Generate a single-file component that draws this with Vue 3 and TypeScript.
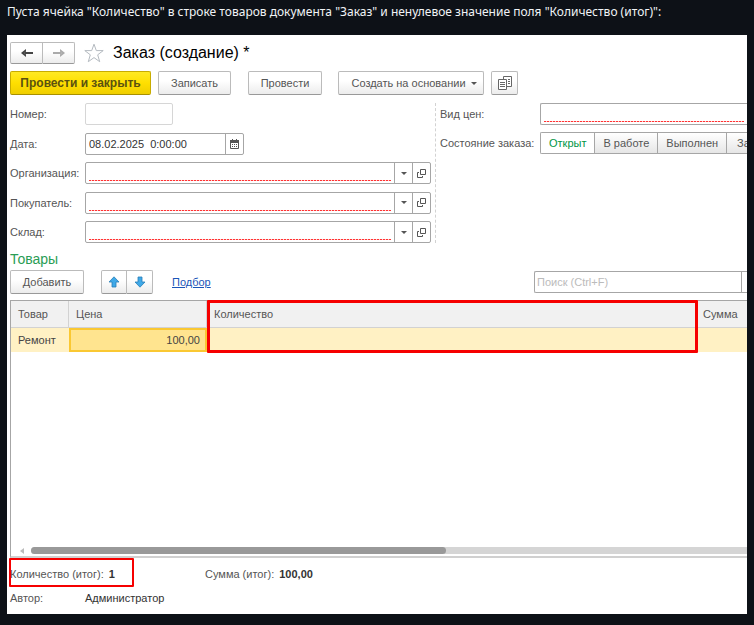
<script setup lang="ts">
import { ref } from 'vue'

interface Lookup {
  id: string
  label: string
}

interface Item {
  name: string
  price: string
  quantity: string
}

const lookups: Lookup[] = [
  { id: 'organization', label: 'Организация:' },
  { id: 'customer', label: 'Покупатель:' },
  { id: 'warehouse', label: 'Склад:' },
]

const states: string[] = ['Открыт', 'В работе', 'Выполнен', 'За']
const state = ref<string>('Открыт')
const orderDate = ref<string>('08.02.2025  0:00:00')
const items = ref<Item[]>([{ name: 'Ремонт', price: '100,00', quantity: '' }])
</script>

<template>
  <main class="page">
    <p class="caption">Пуста ячейка "Количество" в строке товаров документа "Заказ" и ненулевое значение поля "Количество (итог)":</p>

    <section class="window">
      <header class="title-row">
        <div class="pair nav">
          <button type="button" class="btn" aria-label="Назад">
            <svg width="12" height="10" viewBox="0 0 12 10"><path d="M12 4v2H4V4zM0 5l5-4v2.500L3.500 5 5 6.500V9z" fill="#444" /></svg>
          </button>
          <button type="button" class="btn" aria-label="Вперед">
            <svg width="12" height="10" viewBox="0 0 12 10"><path d="M0 4v2h8V4zM12 5L7 1v2.500L8.500 5 7 6.500V9z" fill="#aaa" /></svg>
          </button>
        </div>
        <svg class="star" width="22" height="20" viewBox="0 0 22 20"><path d="M11 1.2l2.300 6.400h6.900l-5.500 4.200 2 6.900L11 14.600l-5.700 4.100 2-6.900L1.800 7.600h6.900z" fill="#fff" stroke="#b4bac0" stroke-width="1" /></svg>
        <h1>Заказ (создание) *</h1>
      </header>

      <div class="toolbar">
        <button type="button" class="btn primary">Провести и закрыть</button>
        <button type="button" class="btn save">Записать</button>
        <button type="button" class="btn post">Провести</button>
        <button type="button" class="btn create">Создать на основании<span class="caret"></span></button>
        <button type="button" class="btn icon" aria-label="Документы">
          <svg width="14" height="14" viewBox="0 0 14 14" fill="#fff" stroke="#666">
            <path d="M5.500.5h8v10h-8z" />
            <path d="M10 3.500h2M10 5.500h2M10 7.500h2" />
            <path d="M.5 3.500h8v10h-8z" />
            <path d="M2 6.500h5M2 8.500h5M2 10.500h5" />
          </svg>
        </button>
      </div>

      <div class="form">
        <div class="fields main-fields">
          <label for="number">Номер:</label>
          <input id="number" class="box number" type="text" />

          <label for="date">Дата:</label>
          <div class="box date">
            <input id="date" v-model="orderDate" type="text" />
            <button type="button" aria-label="Календарь">
              <svg width="9" height="10" viewBox="0 0 9 10">
                <path d="M.5 1.500h8v8h-8z" fill="#fff" stroke="#555" />
                <path d="M0 1h9v3H0zM2 0h1v2H2zM6 0h1v2H6zM2 5h1v1H2zM4 5h1v1H4zM6 5h1v1H6zM2 7h1v1H2zM4 7h1v1H4zM6 7h1v1H6z" fill="#555" />
              </svg>
            </button>
          </div>

          <template v-for="field in lookups" :key="field.id">
            <label :for="field.id">{{ field.label }}</label>
            <div class="box">
              <input :id="field.id" class="required" type="text" />
              <button type="button" aria-label="Выбрать"><span class="caret"></span></button>
              <button type="button" aria-label="Открыть">
                <svg width="9" height="9" viewBox="0 0 9 9" fill="none" stroke="#555"><path d="M3.500.5h5v5h-5zM2 3.500H.5v5h5V7" /></svg>
              </button>
            </div>
          </template>
        </div>

        <div class="fields side-fields">
          <label for="price-kind">Вид цен:</label>
          <div class="box open-end"><input id="price-kind" class="required" type="text" /></div>

          <span id="state-label">Состояние заказа:</span>
          <div class="segments" role="radiogroup" aria-labelledby="state-label">
            <label v-for="name in states" :key="name" class="segment" :class="{ active: state === name }">
              <input v-model="state" type="radio" name="state" :value="name" />{{ name }}
            </label>
          </div>
        </div>
      </div>

      <h2>Товары</h2>
      <div class="commands">
        <button type="button" class="btn add">Добавить</button>
        <div class="pair move">
          <button type="button" class="btn" aria-label="Вверх">
            <svg width="12" height="12" viewBox="0 0 12 12"><path d="M6 .8l5 5.200H8v5H4V6H1z" fill="#3fa9e8" stroke="#2a7fb8" stroke-width=".8" /></svg>
          </button>
          <button type="button" class="btn" aria-label="Вниз">
            <svg width="12" height="12" viewBox="0 0 12 12"><path d="M6 11.200L1 6h3V1h4v5h3z" fill="#3fa9e8" stroke="#2a7fb8" stroke-width=".8" /></svg>
          </button>
        </div>
        <a href="#">Подбор</a>
        <div class="box open-end search">
          <input type="text" placeholder="Поиск (Ctrl+F)" aria-label="Поиск (Ctrl+F)" />
          <button type="button" aria-label="Очистить"></button>
        </div>
      </div>

      <div class="grid">
        <table>
          <thead>
            <tr>
              <th class="name">Товар</th>
              <th class="price">Цена</th>
              <th class="quantity">Количество<span class="mark"></span></th>
              <th class="sum">Сумма</th>
            </tr>
          </thead>
          <tbody>
            <tr v-for="item in items" :key="item.name">
              <td>{{ item.name }}</td>
              <td class="selected">{{ item.price }}</td>
              <td>{{ item.quantity }}</td>
              <td></td>
            </tr>
          </tbody>
        </table>
        <div class="scroll">
          <svg width="4" height="6" viewBox="0 0 4 6"><path d="M4 0v6L0 3z" fill="#bbb" /></svg>
          <div class="track"><div class="thumb"></div></div>
        </div>
      </div>

      <footer>
        <div class="totals">
          <div class="total marked">Количество (итог): <b>1</b></div>
          <div class="total">Сумма (итог): <b>100,00</b></div>
        </div>
        <div class="author"><span>Автор:</span><span class="person">Администратор</span></div>
      </footer>
    </section>
  </main>
</template>

<style>
body {
  background: #0d1117;
}
</style>

<style scoped>
* {
  box-sizing: border-box;
}

.page {
  display: flex;
  flex-direction: column;
  min-height: 100vh;
  padding: 0 7px 11px;
  background: #0d1117;
}

.caption {
  margin: 0;
  padding: 2px 0 13px;
  color: #f0f3f6;
  font: 12px/20px "Noto Sans", sans-serif;
  white-space: nowrap;
}

.window {
  flex: 1;
  display: flex;
  flex-direction: column;
  padding: 6px 0 8px 3px;
  overflow: hidden;
  background: #fff;
  color: #555;
  font: 11px/16px "Liberation Sans", Arial, sans-serif;
}

button,
input {
  margin: 0;
  padding: 0;
  border: 0;
  background: none;
  color: inherit;
  font: inherit;
}

.btn {
  display: flex;
  align-items: center;
  justify-content: center;
  height: 24px;
  border: 1px solid #bbb;
  border-bottom-color: #999;
  border-radius: 2px;
  background: linear-gradient(#fff 40%, #ececec);
  white-space: nowrap;
}

.pair {
  display: flex;
}

.pair .btn:first-child {
  border-radius: 2px 0 0 2px;
}

.pair .btn:last-child {
  border-left: 0;
  border-radius: 0 2px 2px 0;
}

.title-row {
  display: flex;
  align-items: center;
  height: 24px;
}

.nav .btn {
  width: 32px;
  height: 22px;
}

.nav .btn:first-child {
  width: 33px;
}

.star {
  margin: 0 8px;
}

h1 {
  margin: 0;
  color: #000;
  font-size: 16px;
  font-weight: 400;
  line-height: 24px;
}

.toolbar {
  display: flex;
  margin-top: 6px;
}

.primary {
  width: 141px;
  border-color: #c8ac00;
  border-bottom-color: #a89000;
  background: linear-gradient(#ffe924, #ffdf00 50%, #efce00);
  color: #5a5210;
  font-size: 12px;
  font-weight: 700;
}

.save {
  width: 73px;
  margin-left: 7px;
}

.post {
  width: 74px;
  margin-left: 17px;
}

.create {
  gap: 5px;
  width: 146px;
  margin-left: 16px;
  padding-left: 6px;
}

.icon {
  width: 27px;
  margin-left: 7px;
}

.caret {
  width: 0;
  border: 3px solid transparent;
  border-top-color: #555;
  border-bottom: 0;
}

.form {
  display: flex;
  height: 140px;
  margin-top: 8px;
}

.fields {
  display: grid;
  align-items: center;
}

.main-fields {
  flex: 0 0 426px;
  grid-template-columns: 75px 346px;
  align-content: space-between;
  border-right: 1px dashed #d2d2d2;
}

.side-fields {
  flex: 1;
  grid-template-columns: 100px 1fr;
  align-content: start;
  row-gap: 7px;
  min-width: 0;
  padding-left: 4px;
  white-space: nowrap;
}

.box {
  display: flex;
  height: 22px;
  border: 1px solid #a6a6a6;
  border-radius: 2px;
  background: #fff;
}

.box input {
  flex: 1;
  min-width: 0;
  padding-left: 3px;
  color: #333;
}

.box button {
  display: flex;
  align-items: center;
  justify-content: center;
  width: 18px;
  border-left: 1px solid #a6a6a6;
}

.number {
  width: 88px;
  border-color: #d6d6d6;
}

.date {
  width: 159px;
}

.date input {
  white-space: pre;
}

.box .required {
  background: repeating-linear-gradient(90deg, #f33 0 2px, #fcc 2px 3px) 3px calc(100% - 2px) / calc(100% - 6px) 1px no-repeat;
}

.open-end {
  border-right: 0;
  border-radius: 2px 0 0 2px;
}

.segments {
  display: flex;
  height: 22px;
  border: 1px solid #a6a6a6;
  border-right: 0;
  border-radius: 2px 0 0 2px;
  overflow: hidden;
}

.segment {
  flex: none;
  padding: 0 8px;
  border-right: 1px solid #a6a6a6;
  background: linear-gradient(#fff, #e6e6e6);
  line-height: 20px;
}

.segment:last-child {
  padding: 0 0 0 10px;
  border-right: 0;
}

.segment input {
  position: absolute;
  opacity: 0;
}

.segment.active {
  background: #fff;
  color: #009646;
}

h2 {
  margin: 8px 0 3px;
  color: #2a9d55;
  font-size: 14px;
  font-weight: 400;
  line-height: 16px;
}

.commands {
  display: flex;
  align-items: center;
}

.add {
  width: 74px;
}

.move {
  margin: 0 19px 0 17px;
}

.move .btn {
  width: 26px;
}

a {
  color: #1a55b8;
}

.search {
  width: 213px;
  margin-left: auto;
}

.search input {
  padding-left: 2px;
}

.search input::placeholder {
  color: #bbb;
  opacity: 1;
}

.search button {
  width: 6px;
}

.grid {
  flex: 1;
  display: flex;
  flex-direction: column;
  margin-top: 6px;
  border: 1px solid #a6a6a6;
  border-right: 0;
  border-bottom: 2px solid #d0d0d0;
}

table {
  width: 100%;
  border-spacing: 0;
  table-layout: fixed;
}

th {
  height: 27px;
  padding: 0 7px;
  border-right: 1px solid #d2d2d2;
  border-bottom: 1px solid #d2d2d2;
  background: #f1f1f1;
  font-weight: 400;
  text-align: left;
}

.name {
  width: 58px;
}

.price {
  width: 138px;
}

.quantity {
  position: relative;
}

.sum {
  width: 50px;
  border-right: 0;
  padding-right: 0;
  padding-left: 6px;
}

.mark {
  position: absolute;
  inset: -1px -2px auto 0;
  height: 53px;
  border: 3px solid #f60000;
  border-radius: 1px;
}

td {
  height: 24px;
  padding: 0 7px;
  background: #fff1c4;
  color: #444;
}

.selected {
  border: 2px solid #fac832;
  padding: 0 5px;
  background: #ffe48f;
  text-align: right;
}

.scroll {
  display: flex;
  align-items: center;
  gap: 7px;
  margin-top: auto;
  padding: 0 0 2px 9px;
}

.track {
  flex: 1;
  height: 7px;
  border-radius: 4px 0 0 4px;
  background: #d5d5d5;
}

.thumb {
  width: 58%;
  height: 7px;
  border-radius: 4px;
  background: #999;
}

.totals {
  display: flex;
}

.total {
  width: 195px;
  padding: 8px 0 5px;
}

.marked {
  position: relative;
}

.marked::after {
  position: absolute;
  inset: 0 auto 0 -1px;
  box-sizing: border-box;
  width: 125px;
  border: 2px solid #f60000;
  border-radius: 1px;
  content: "";
}

b {
  margin-left: 2px;
  color: #333;
}

.author {
  display: flex;
  margin-top: 3px;
}

.author span:first-child {
  width: 75px;
}

.author .person {
  color: #333;
}
</style>
